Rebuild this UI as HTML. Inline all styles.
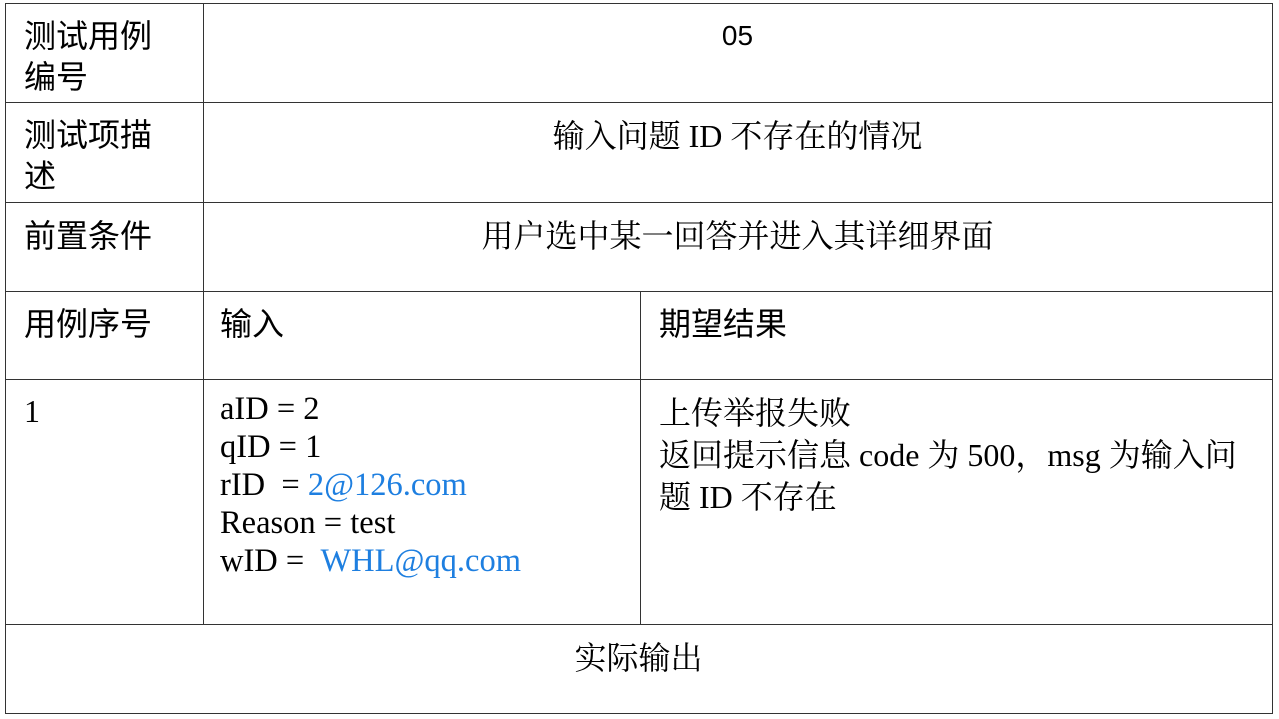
<!DOCTYPE html>
<html><head><meta charset="utf-8"><style>
body{margin:0;width:1279px;height:719px;background:#fff;position:relative;overflow:hidden;font-family:"Liberation Serif","Noto Serif CJK SC","Noto Sans CJK SC",serif;color:#000}
.h{position:absolute;height:1px;background:#333}
.v{position:absolute;width:1px;background:#333}
.t{position:absolute;font-size:32px;line-height:42px;white-space:nowrap}
.c{font-family:"Liberation Sans","Noto Sans CJK SC",sans-serif}
.b{color:#1e7fe0}
.m{text-align:center}
</style></head><body>
<div class="h" style="left:5px;width:1268px;top:3px"></div>
<div class="h" style="left:5px;width:1268px;top:102px"></div>
<div class="h" style="left:5px;width:1268px;top:202px"></div>
<div class="h" style="left:5px;width:1268px;top:291px"></div>
<div class="h" style="left:5px;width:1268px;top:379px"></div>
<div class="h" style="left:5px;width:1268px;top:624px"></div>
<div class="h" style="left:5px;width:1268px;top:713px"></div>
<div class="v" style="left:5px;top:3px;height:711px"></div>
<div class="v" style="left:1272px;top:3px;height:711px"></div>
<div class="v" style="left:203px;top:3px;height:621px"></div>
<div class="v" style="left:640px;top:291px;height:333px"></div>

<div class="t c" style="left:24px;top:16px;line-height:41px">测试用例<br>编号</div>
<div class="t m" style="left:203px;width:1069px;top:15px;font-family:'Liberation Sans',sans-serif;font-size:28px">05</div>
<div class="t c" style="left:24px;top:115px;line-height:41px">测试项描<br>述</div>
<div class="t m" style="left:203px;width:1069px;top:115px">输入问题 ID 不存在的情况</div>
<div class="t c" style="left:24px;top:215px">前置条件</div>
<div class="t m" style="left:203px;width:1069px;top:215px">用户选中某一回答并进入其详细界面</div>
<div class="t c" style="left:24px;top:303px">用例序号</div>
<div class="t c" style="left:220px;top:303px">输入</div>
<div class="t c" style="left:659px;top:303px">期望结果</div>
<div class="t" style="left:24px;top:390px">1</div>
<div class="t" style="left:220px;top:390px;line-height:38px;font-size:32.5px">aID = 2<br>qID = 1<br>rID &nbsp;= <span class="b">2@126.com</span><br>Reason = test<br>wID = &nbsp;<span class="b">WHL@qq.com</span></div>
<div class="t" style="left:659px;top:392px;line-height:42px">上传举报失败<br>返回提示信息 code 为 500，msg 为输入问<br>题 ID 不存在</div>
<div class="t m" style="left:5px;width:1267px;top:637px">实际输出</div>
</body></html>
